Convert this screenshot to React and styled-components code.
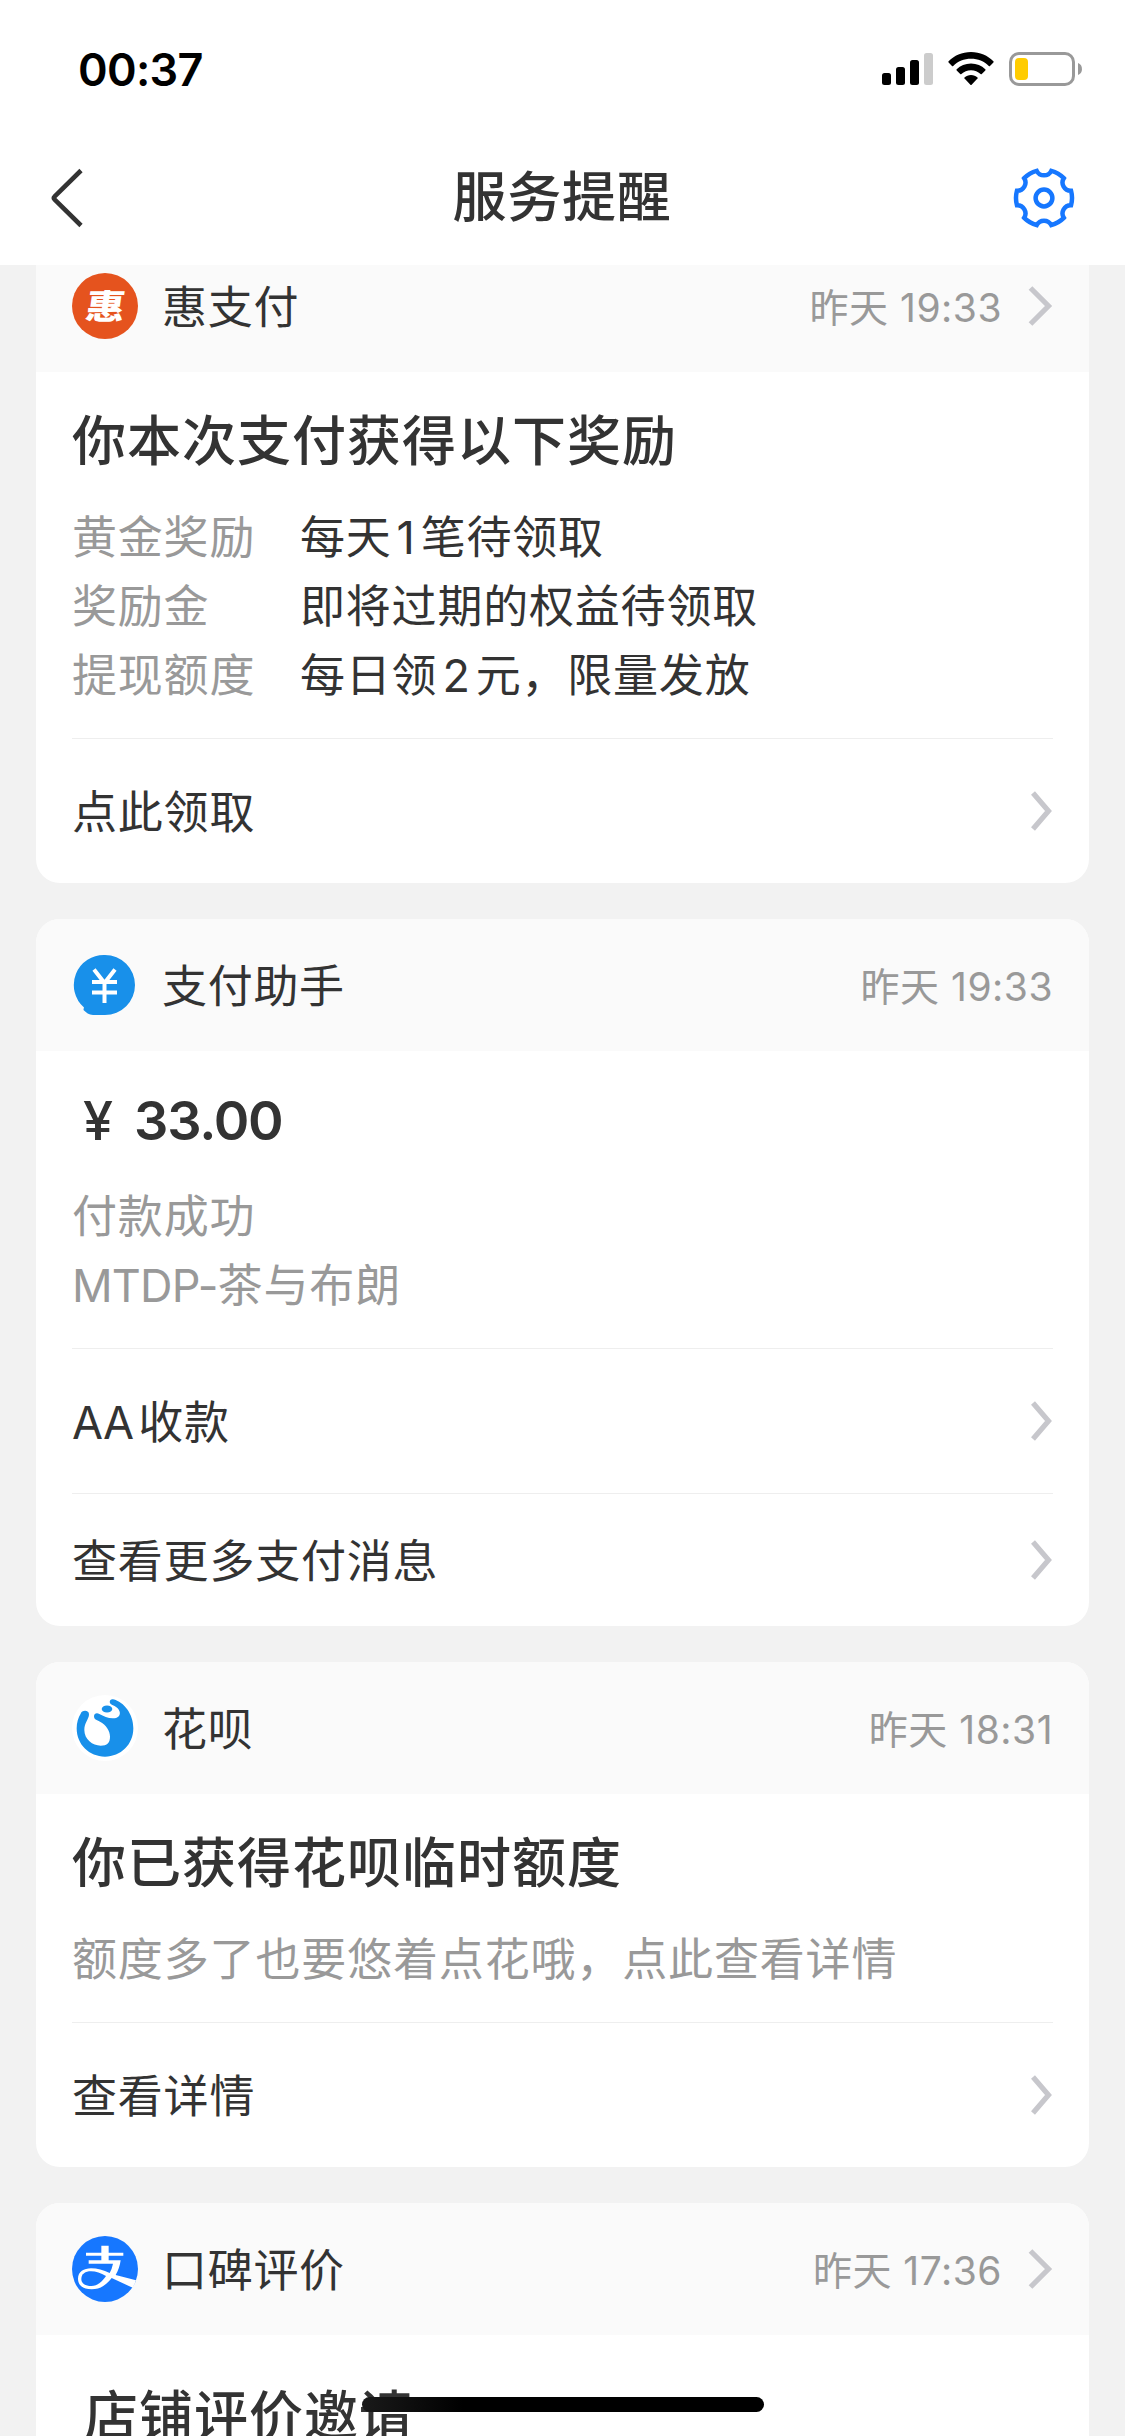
import styled, { createGlobalStyle } from "styled-components";

const cards = [
  {
    id: "hui",
    icon: "hui",
    name: "惠支付",
    time: "昨天 19:33",
    arrow: true,
    title: "你本次支付获得以下奖励",
    rows: [
      { label: "黄金奖励", value: ["每天", "1", "笔待领取"] },
      { label: "奖励金", value: ["即将过期的权益待领取"] },
      { label: "提现额度", value: ["每日领", "2", "元，限量发放"] },
    ],
    actions: [{ text: "点此领取" }],
  },
  {
    id: "pay",
    icon: "yen",
    name: "支付助手",
    time: "昨天 19:33",
    amount: "33.00",
    lines: [{ text: "付款成功" }, { latin: "MTDP-", text: "茶与布朗" }],
    actions: [
      { latin: "AA", text: "收款" },
      { text: "查看更多支付消息", compact: true },
    ],
  },
  {
    id: "huabei",
    icon: "huabei",
    name: "花呗",
    time: "昨天 18:31",
    title: "你已获得花呗临时额度",
    lines: [{ text: "额度多了也要悠着点花哦，点此查看详情" }],
    actions: [{ text: "查看详情" }],
  },
  {
    id: "koubei",
    icon: "alipay",
    name: "口碑评价",
    time: "昨天 17:36",
    arrow: true,
    title: "店铺评价邀请",
    inset: true,
    actions: [],
  },
];

const gearPath = () => {
  const point = (deg) => {
    const rad = (deg * Math.PI) / 180;
    return `${(28 * Math.cos(rad)).toFixed(2)} ${(28 * Math.sin(rad)).toFixed(2)}`;
  };
  let d = `M${point(-15)}`;
  for (let a = 0; a < 360; a += 60) {
    d += `A28 28 0 0 1 ${point(a + 15)}A8.2 8.2 0 0 0 ${point(a + 45)}`;
  }
  return d + "Z";
};

const GearIcon = () => (
  <svg width="64" height="64" viewBox="-32 -32 64 64" fill="none" stroke="#1677ff" strokeWidth="4.5">
    <path d={gearPath()} />
    <circle r="8.4" />
  </svg>
);

const BackIcon = () => (
  <svg width="36" height="60" viewBox="0 0 36 60" fill="none" stroke="#333" strokeWidth="4.6">
    <path d="M33 2.5L6.5 28.6Q5 30 6.5 31.4L33 57.5" />
  </svg>
);

const SignalIcon = () => (
  <svg width="51" height="32" viewBox="0 0 51 32">
    <rect x="0" y="20" width="9" height="12" rx="2.5" />
    <rect x="14" y="14" width="9" height="18" rx="2.5" />
    <rect x="28" y="7" width="9" height="25" rx="2.5" />
    <rect x="42" y="0" width="9" height="32" rx="2.5" fill="#ccc" />
  </svg>
);

const WifiIcon = () => (
  <svg width="46" height="34" viewBox="0 0 46 34">
    <path d="M23 0C32 0 39.8 3.6 45.4 9.2Q46 9.8 45.4 10.4L42 13.9Q41.4 14.5 40.8 13.9C36 9.3 30 6.8 23 6.8S10 9.3 5.2 13.9Q4.6 14.5 4 13.9L.6 10.4Q0 9.8 .6 9.2C6.2 3.6 14 0 23 0Z" />
    <path d="M23 11.5C28.8 11.5 33.5 13.7 37.3 17.3Q37.9 17.9 37.3 18.5L33.8 22Q33.2 22.6 32.6 22C29.9 19.6 26.8 18.2 23 18.2S16.1 19.6 13.4 22Q12.8 22.6 12.2 22L8.7 18.5Q8.1 17.9 8.7 17.3C12.5 13.7 17.2 11.5 23 11.5Z" />
    <path d="M23 23C25.6 23 27.8 23.9 29.5 25.4Q30 26 29.5 26.6L23.6 32.7Q23 33.3 22.4 32.7L16.5 26.6Q16 26 16.5 25.4C18.2 23.9 20.4 23 23 23Z" />
  </svg>
);

const BatteryIcon = () => (
  <svg width="74" height="34" viewBox="0 0 74 34">
    <rect x="1.5" y="1.5" width="63" height="31" rx="8.5" fill="none" stroke="#999" strokeWidth="3" />
    <rect x="6" y="6" width="13" height="22" rx="4" fill="#ffcc00" />
    <path d="M69 11C74.3 12.5 74.3 21.5 69 23Z" fill="#999" />
  </svg>
);

const Chevron = ({ wide }) => (
  <svg width="26" height="42" viewBox="0 0 26 42" fill="none" stroke="#c7c7cc" strokeWidth="5.2">
    <path d={wide ? "M3.5 3L21.5 21L3.5 39" : "M6 3L21.5 21L6 39"} />
  </svg>
);

const YenIcon = () => (
  <svg width="66" height="66" viewBox="0 0 66 66">
    <path
      d="M33 3A30 30 0 0 1 33 63H21C17 63 14 60.5 11.5 58Q11.500 56.500 12 55.500A30 30 0 0 1 33 3Z"
      fill="#1890ea"
    />
    <path d="M22 17.5L32.5 31L43 17.5M32.5 30V51M20 30H45M20 40.5H45" fill="none" stroke="#fff" strokeWidth="4" />
  </svg>
);

const HuabeiIcon = () => (
  <svg width="66" height="66" viewBox="36 45 198 198">
    <circle cx="135" cy="144" r="99" fill="#fff" />
    <path
      d="M62 101C64 90 88 88 87 104C86 118 73 128 73 150C73 178 98 197 122 197C142 197 150 188 150 170C150 152 138 134 120 125C110 120 102 119 102 109C102 100 111 98 118 102C130 108 144 115 158 115C174 115 182 106 179 95C176 84 166 79 157 75C145 71 148 56 159 58C193 66 220 103 220 145C220 194 182 230 135 230C88 230 50 194 50 145C50 128 55 112 62 101Z"
      fill="#1890ea"
    />
    <ellipse cx="141" cy="87" rx="16" ry="10.5" fill="#1890ea" />
  </svg>
);

const AlipayIcon = () => (
  <svg width="66" height="66" viewBox="36 48 198 198">
    <circle cx="135" cy="147" r="99" fill="#1677ff" />
    <path
      d="M124 77H146V98H190V107H146V121H182C180 136 175 152 167 165L228 181Q225 192 218 203L155 174C142 192 122 208 95 208C70 208 54 196 54 176C54 155 72 145 93 145C112 145 130 151 149 159Q156 146 159 131H86V121H124V107H78V98H124Z"
      fill="#fff"
    />
    <path d="M138 168C122 159 108 154 93 154C76 154 64 162 64 177C64 191 76 198 94 198C113 198 127 184 138 168Z" fill="#1677ff" />
  </svg>
);

const HuiIcon = () => (
  <HuiBadge>
    <HuiGlyph>惠</HuiGlyph>
  </HuiBadge>
);

const icons = {
  hui: HuiIcon,
  yen: YenIcon,
  huabei: HuabeiIcon,
  alipay: AlipayIcon,
};

const Card = ({ card }) => {
  const { icon, name, time, arrow, title, inset, amount, rows, lines, actions } = card;
  const Icon = icons[icon];
  return (
    <CardWrapper>
      <CardHeader>
        <Icon />
        <Name>{name}</Name>
        <Time>{time}</Time>
        {arrow && <Chevron wide />}
      </CardHeader>
      <CardBody $inset={inset}>
        {title && <Title>{title}</Title>}
        {amount && (
          <Amount>
            <Currency>¥</Currency>
            {amount}
          </Amount>
        )}
        {rows &&
          rows.map(({ label, value }) => (
            <Row key={label}>
              <Label>{label}</Label>
              <Value>
                {value.map((part) => (/^\d+$/.test(part) ? <Digit key={part}>{part}</Digit> : part))}
              </Value>
            </Row>
          ))}
        {lines &&
          lines.map(({ latin, text }) => (
            <Line key={text}>
              {latin && <Latin>{latin}</Latin>}
              {text}
            </Line>
          ))}
      </CardBody>
      {actions.map(({ latin, text, compact }) => (
        <Action key={text} $compact={compact}>
          <ActionText>
            {latin && <Latin $gap>{latin}</Latin>}
            {text}
          </ActionText>
          <Chevron />
        </Action>
      ))}
    </CardWrapper>
  );
};

const App = () => {
  return (
    <Page>
      <GlobalStyle />
      <StatusBar>
        <Clock>00:37</Clock>
        <StatusIcons>
          <SignalIcon />
          <WifiIcon />
          <BatteryIcon />
        </StatusIcons>
      </StatusBar>
      <NavBar>
        <BackIcon />
        <NavTitle>服务提醒</NavTitle>
        <GearIcon />
      </NavBar>
      <List>
        {cards.map((card) => (
          <Card key={card.id} card={card} />
        ))}
      </List>
      <HomeIndicator />
    </Page>
  );
};

export default App;

const GlobalStyle = createGlobalStyle`
  * {
    box-sizing: border-box;
  }
  body {
    margin: 0;
    background: #f2f2f2;
    font-family: Inter, "Noto Sans CJK SC", sans-serif;
    color: #333;
  }
  svg {
    display: block;
    flex-shrink: 0;
  }
`;

const Page = styled.div`
  position: relative;
  width: 1125px;
  height: 2436px;
  display: flex;
  flex-direction: column;
  overflow: hidden;
`;

const StatusBar = styled.div`
  height: 132px;
  flex-shrink: 0;
  padding: 6px 42px 0 78px;
  display: flex;
  align-items: center;
  justify-content: space-between;
  background: #fff;
`;

const Clock = styled.span`
  font-size: 45px;
  font-weight: 600;
  letter-spacing: -0.7px;
  color: #000;
`;

const StatusIcons = styled.div`
  display: flex;
  align-items: center;
  gap: 15px;
`;

const NavBar = styled.div`
  height: 133px;
  flex-shrink: 0;
  padding: 0 49px 2px 48px;
  display: flex;
  align-items: center;
  justify-content: space-between;
  background: #fff;
`;

const NavTitle = styled.h1`
  margin: 0 0 0 28px;
  font-size: 54px;
  line-height: 80px;
  font-weight: 500;
  letter-spacing: 0.8px;
`;

const List = styled.div`
  flex: 1;
  min-height: 0;
  padding: 0 36px;
  display: flex;
  flex-direction: column;
  gap: 36px;
  overflow: hidden;

  /* the list is scrolled a little past the first card's top */
  & > :first-child {
    margin-top: -25px;
  }
`;

const CardWrapper = styled.div`
  flex-shrink: 0;
  border-radius: 24px;
  background: #fff;
  overflow: hidden;
`;

const CardHeader = styled.div`
  height: 132px;
  padding: 0 36px;
  display: flex;
  align-items: center;
  background: #fafafa;
`;

const Name = styled.span`
  flex: 1;
  margin-left: 24px;
  padding-bottom: 3px;
  font-size: 45px;
  letter-spacing: 0.7px;
`;

const Time = styled.span`
  padding-bottom: 3px;
  font-size: 39px;
  letter-spacing: 0.5px;
  color: #999;

  & + svg {
    margin-left: 25px;
  }
`;

const CardBody = styled.div`
  padding: ${({ $inset }) => ($inset ? "43px 48px 28px" : "31px 36px 28px")};
`;

const Title = styled.h2`
  margin: 0 0 22px;
  font-size: 54px;
  line-height: 78px;
  font-weight: 500;
  letter-spacing: 1px;
`;

const Amount = styled.div`
  margin-bottom: 22px;
  display: flex;
  font-size: 54px;
  line-height: 78px;
  font-weight: 600;
  letter-spacing: -1.2px;
`;

const Currency = styled.span`
  width: 62px;
  padding-left: 11px;
  font-weight: 500;
`;

const Row = styled.div`
  display: flex;
  font-size: 45px;
  line-height: 69px;
  letter-spacing: 0.8px;
`;

const Label = styled.span`
  width: 228px;
  color: #999;
`;

const Value = styled.span``;

const Digit = styled.span`
  margin: 0 5px;
`;

const Line = styled.div`
  font-size: 45px;
  line-height: 69px;
  letter-spacing: 0.85px;
  color: #999;
`;

const Action = styled.div`
  height: ${({ $compact }) => ($compact ? "133px" : "145px")};
  margin: 0 36px;
  border-top: 1px solid #eee;
  display: flex;
  align-items: center;
  justify-content: space-between;
`;

const ActionText = styled.span`
  padding-bottom: 3px;
  font-size: 45px;
  letter-spacing: 0.8px;
`;

const Latin = styled.span`
  margin-right: ${({ $gap }) => ($gap ? "5px" : "0")};
  letter-spacing: -0.8px;
`;

const HuiBadge = styled.div`
  width: 66px;
  height: 66px;
  border-radius: 50%;
  background: #e5531e;
  display: flex;
  align-items: center;
  justify-content: center;
`;

const HuiGlyph = styled.span`
  font-size: 37px;
  line-height: 37px;
  font-weight: 900;
  color: #fff;
  transform: skewX(-8deg) scale(1.06, 0.92);
`;

const HomeIndicator = styled.div`
  position: absolute;
  left: 362px;
  bottom: 24px;
  width: 402px;
  height: 15px;
  border-radius: 8px;
  background: linear-gradient(to right, #1a1a1a, #000 25%);
`;
